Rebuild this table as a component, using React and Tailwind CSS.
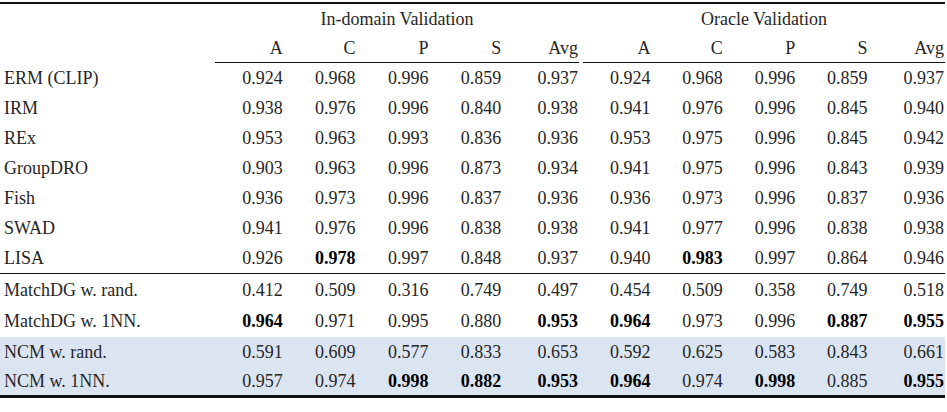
import React from "react";

const rows = [
  { name: "ERM (CLIP)", a: ["0.924", "0.968", "0.996", "0.859", "0.937"], b: ["0.924", "0.968", "0.996", "0.859", "0.937"] },
  { name: "IRM", a: ["0.938", "0.976", "0.996", "0.840", "0.938"], b: ["0.941", "0.976", "0.996", "0.845", "0.940"] },
  { name: "REx", a: ["0.953", "0.963", "0.993", "0.836", "0.936"], b: ["0.953", "0.975", "0.996", "0.845", "0.942"] },
  { name: "GroupDRO", a: ["0.903", "0.963", "0.996", "0.873", "0.934"], b: ["0.941", "0.975", "0.996", "0.843", "0.939"] },
  { name: "Fish", a: ["0.936", "0.973", "0.996", "0.837", "0.936"], b: ["0.936", "0.973", "0.996", "0.837", "0.936"] },
  { name: "SWAD", a: ["0.941", "0.976", "0.996", "0.838", "0.938"], b: ["0.941", "0.977", "0.996", "0.838", "0.938"] },
  { name: "LISA", a: ["0.926", "*0.978", "0.997", "0.848", "0.937"], b: ["0.940", "*0.983", "0.997", "0.864", "0.946"] },
];

const matchRows = [
  { name: "MatchDG w. rand.", a: ["0.412", "0.509", "0.316", "0.749", "0.497"], b: ["0.454", "0.509", "0.358", "0.749", "0.518"], h: "h-[31px]" },
  { name: "MatchDG w. 1NN.", a: ["*0.964", "0.971", "0.995", "0.880", "*0.953"], b: ["*0.964", "0.973", "0.996", "*0.887", "*0.955"], h: "h-[32px]" },
];

const ncmRows = [
  { name: "NCM w. rand.", a: ["0.591", "0.609", "0.577", "0.833", "0.653"], b: ["0.592", "0.625", "0.583", "0.843", "0.661"] },
  { name: "NCM w. 1NN.", a: ["0.957", "0.974", "*0.998", "*0.882", "*0.953"], b: ["*0.964", "0.974", "*0.998", "0.885", "*0.955"] },
];

function Cell({ v, last }) {
  const bold = v.startsWith("*");
  return (
    <div className={`flex items-center justify-end ${last ? "pr-[1px]" : "pr-[5px]"} ${bold ? "font-bold text-black" : ""}`}>
      {bold ? v.slice(1) : v}
    </div>
  );
}

function Group({ vals, width }) {
  return (
    <div className={`grid grid-cols-5 ${width}`}>
      {vals.map((v, i) => (
        <Cell key={i} v={v} last={i === 4} />
      ))}
    </div>
  );
}

function Row({ r, h = "h-[30px]", shaded }) {
  return (
    <div className={`flex ${h} ${shaded ? "bg-[#dbe5f2]" : ""}`}>
      <div className="w-[215px] flex items-center pl-[4px]">{r.name}</div>
      <Group vals={r.a} width="w-[364px]" />
      <div className="w-[4px]" />
      <Group vals={r.b} width="w-[362px]" />
    </div>
  );
}

export default function App() {
  const heads = ["A", "C", "P", "S", "Avg"];
  return (
    <div className="bg-white w-[947px] h-[412px] pt-[2px] text-[18px] text-[#262626] leading-none" style={{ fontFamily: '"Liberation Serif", "Times New Roman", serif' }}>
      <div className="w-[945px] border-t-[2px] border-b-[3px] border-[#111]">
        <div className="flex h-[29px]">
          <div className="w-[215px]" />
          <div className="w-[364px] flex items-center justify-center">In-domain Validation</div>
          <div className="w-[4px]" />
          <div className="w-[362px] flex items-center justify-center">Oracle Validation</div>
        </div>
        <div className="flex h-[30px]">
          <div className="w-[215px]" />
          <div className="w-[364px] grid grid-cols-5 border-b border-[#111]">
            {heads.map((h, i) => (
              <div key={h} className={`flex items-center justify-end ${i === 4 ? "pr-[1px]" : "pr-[5px]"}`}>{h}</div>
            ))}
          </div>
          <div className="w-[4px]" />
          <div className="w-[362px] grid grid-cols-5 border-b border-[#111]">
            {heads.map((h, i) => (
              <div key={h} className={`flex items-center justify-end ${i === 4 ? "pr-[1px]" : "pr-[5px]"}`}>{h}</div>
            ))}
          </div>
        </div>
        {rows.map((r) => (
          <Row key={r.name} r={r} />
        ))}
        <div className="border-t border-[#111]">
          {matchRows.map((r) => (
            <Row key={r.name} r={r} h={r.h} />
          ))}
        </div>
        {ncmRows.map((r) => (
          <Row key={r.name} r={r} h="h-[29px]" shaded />
        ))}
      </div>
    </div>
  );
}
